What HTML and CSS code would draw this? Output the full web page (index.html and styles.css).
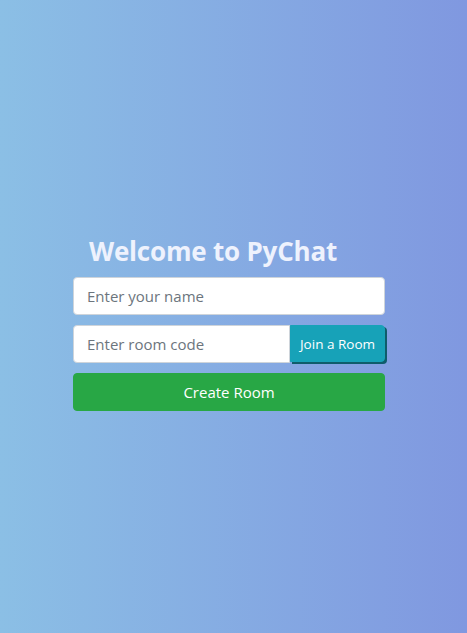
FILE: index.html
```html
<!DOCTYPE html>
<html>
<head>
<meta charset="utf-8">
<link rel="stylesheet" href="styles.css">
</head>
<body>
<main class="page">
  <section class="panel">
    <h1 class="title">Welcome to PyChat</h1>
    <input class="field" type="text" placeholder="Enter your name">
    <div class="group">
      <input class="field field-join" type="text" placeholder="Enter room code">
      <button class="btn btn-join">Join a Room</button>
    </div>
    <button class="btn btn-create">Create Room</button>
  </section>
</main>
</body>
</html>
```

FILE: styles.css
```css
html, body {
  margin: 0;
  padding: 0;
  height: 100%;
}
body {
  background: linear-gradient(to right, #8bbfe5, #8098e0);
  font-family: "Open Sans", "Noto Sans", sans-serif;
}
.page {
  height: 633px;
  display: flex;
  flex-direction: column;
  align-items: flex-start;
  padding-left: 73px;
  padding-top: 232px;
  box-sizing: border-box;
}
.panel {
  width: 312px;
  display: flex;
  flex-direction: column;
}
.title {
  margin: 0 0 7px 16px;
  font-size: 26px;
  font-weight: 700;
  color: #eef2fd;
  line-height: 38px;
  letter-spacing: -0.2px;
}
.field {
  height: 38px;
  box-sizing: border-box;
  border: 1px solid #ced4da;
  border-radius: 4px;
  padding: 6px 13px;
  font-family: inherit;
  font-size: 15px;
  color: #495057;
  background: #fff;
  outline: none;
  margin: 0 0 10px 0;
}
.field::placeholder {
  color: #6c757d;
}
.group {
  display: flex;
  margin-bottom: 10px;
}
.field-join {
  flex: 1;
  min-width: 0;
  margin: 0;
  border-radius: 4px 0 0 4px;
}
.btn {
  font-family: inherit;
  color: #fff;
  border: 1px solid transparent;
  cursor: pointer;
}
.btn-join {
  width: 95px;
  height: 37px;
  background: #17a2b8;
  border-color: #17a2b8;
  border-radius: 0 4px 4px 0;
  font-size: 13.5px;
  padding: 0;
  box-shadow: 2px 2px 0 #0f5d6b;
}
.btn-create {
  height: 38px;
  background: #28a745;
  border-color: #28a745;
  border-radius: 4px;
  font-size: 15px;
}
```
